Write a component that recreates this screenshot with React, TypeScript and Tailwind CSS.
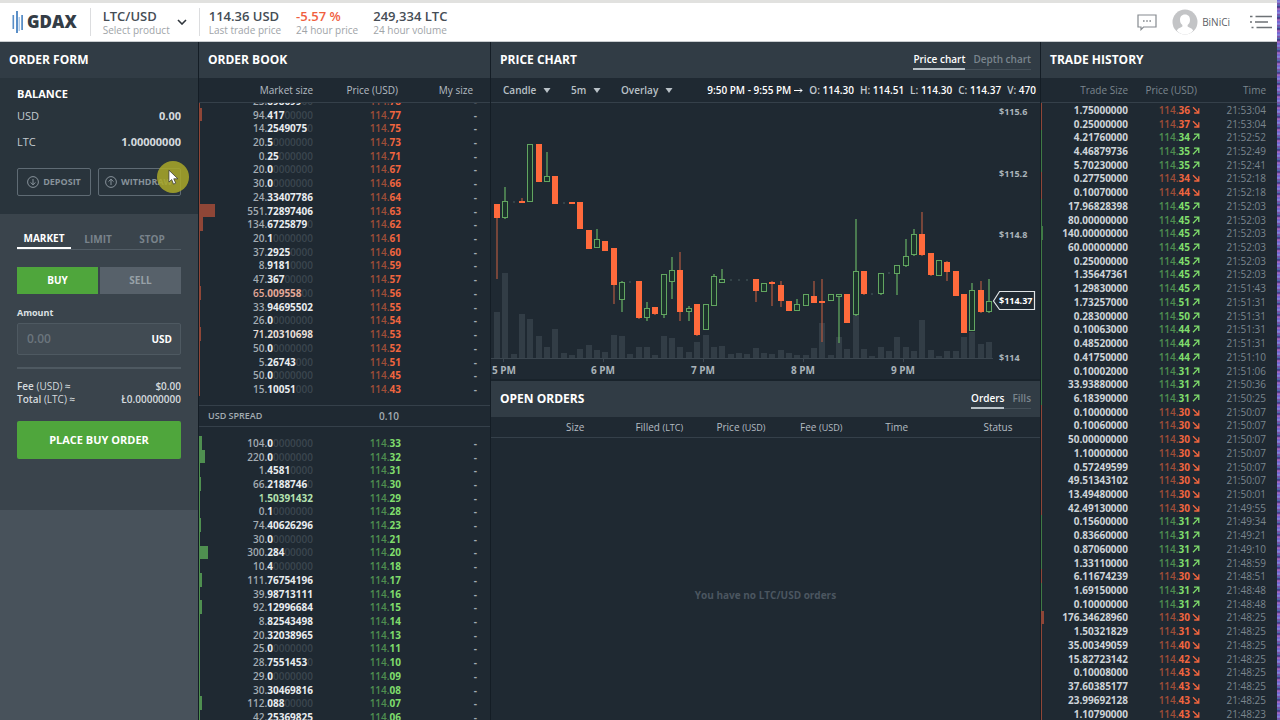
import React, { useState } from "react";

type Side = "up" | "down";
type Level = [size: string, price: string, tint?: string];
type Trade = [size: string, price: string, side: Side, time: string];
// [kind, wick top, body top, body bottom, wick bottom, volume top]
type Candle = ["r" | "g" | "d", number, number, number, number, number];

const asks: Level[] = [
  ["23.898699", "114.78"],
  ["94.417", "114.77"],
  ["14.2549075", "114.75"],
  ["20.5", "114.73"],
  ["0.25", "114.71"],
  ["20.0", "114.67"],
  ["30.0", "114.66"],
  ["24.33407786", "114.64"],
  ["551.72897406", "114.63"],
  ["134.6725879", "114.62"],
  ["20.1", "114.61"],
  ["37.2925", "114.60"],
  ["8.9181", "114.59"],
  ["47.367", "114.57"],
  ["65.009558", "114.56", "text-[#e3a898]"],
  ["33.94695502", "114.55"],
  ["26.0", "114.54"],
  ["71.20310698", "114.53", "text-[#e6ddd6]"],
  ["50.0", "114.52"],
  ["5.26743", "114.51"],
  ["50.0", "114.45"],
  ["15.10051", "114.43"],
];

const bids: Level[] = [
  ["104.0", "114.33"],
  ["220.0", "114.32"],
  ["1.4581", "114.31"],
  ["66.2188746", "114.30"],
  ["1.50391432", "114.29", "text-[#b5e3b0]"],
  ["0.1", "114.28"],
  ["74.40626296", "114.23"],
  ["30.0", "114.21"],
  ["300.284", "114.20"],
  ["10.4", "114.18"],
  ["111.76754196", "114.17"],
  ["39.98713111", "114.16"],
  ["92.12996684", "114.15"],
  ["8.82543498", "114.14"],
  ["20.32038965", "114.13"],
  ["25.0", "114.11"],
  ["28.7551453", "114.10"],
  ["29.0", "114.09"],
  ["30.30469816", "114.08"],
  ["112.088", "114.07"],
  ["42.25369825", "114.06"],
];

const trades: Trade[] = [
  ["1.75000000", "114.36", "down", "21:53:04"],
  ["0.25000000", "114.37", "down", "21:53:04"],
  ["4.21760000", "114.34", "up", "21:52:52"],
  ["4.46879736", "114.35", "up", "21:52:49"],
  ["5.70230000", "114.35", "up", "21:52:41"],
  ["0.27750000", "114.34", "down", "21:52:18"],
  ["0.10070000", "114.44", "down", "21:52:18"],
  ["17.96828398", "114.45", "up", "21:52:03"],
  ["80.00000000", "114.45", "up", "21:52:03"],
  ["140.00000000", "114.45", "up", "21:52:03"],
  ["60.00000000", "114.45", "up", "21:52:03"],
  ["0.25000000", "114.45", "up", "21:52:03"],
  ["1.35647361", "114.45", "up", "21:52:03"],
  ["1.29830000", "114.45", "up", "21:51:43"],
  ["1.73257000", "114.51", "up", "21:51:31"],
  ["0.28300000", "114.50", "up", "21:51:31"],
  ["0.10063000", "114.44", "up", "21:51:31"],
  ["0.48520000", "114.44", "up", "21:51:31"],
  ["0.41750000", "114.44", "up", "21:51:10"],
  ["0.10002000", "114.31", "up", "21:51:06"],
  ["33.93880000", "114.31", "up", "21:50:36"],
  ["6.18390000", "114.31", "up", "21:50:25"],
  ["0.10000000", "114.30", "down", "21:50:07"],
  ["0.10060000", "114.30", "down", "21:50:07"],
  ["50.00000000", "114.30", "down", "21:50:07"],
  ["1.10000000", "114.30", "down", "21:50:07"],
  ["0.57249599", "114.30", "down", "21:50:07"],
  ["49.51343102", "114.30", "down", "21:50:07"],
  ["13.49480000", "114.30", "down", "21:50:01"],
  ["42.49130000", "114.30", "down", "21:49:55"],
  ["0.15600000", "114.31", "up", "21:49:34"],
  ["0.83660000", "114.31", "up", "21:49:21"],
  ["0.87060000", "114.31", "up", "21:49:10"],
  ["1.33110000", "114.31", "up", "21:48:59"],
  ["6.11674239", "114.30", "down", "21:48:51"],
  ["1.69150000", "114.31", "up", "21:48:48"],
  ["0.10000000", "114.31", "up", "21:48:48"],
  ["176.34628960", "114.30", "down", "21:48:25"],
  ["1.50321829", "114.31", "down", "21:48:25"],
  ["35.00349059", "114.40", "down", "21:48:25"],
  ["15.82723142", "114.42", "down", "21:48:25"],
  ["0.10008000", "114.43", "down", "21:48:25"],
  ["37.60385177", "114.43", "down", "21:48:25"],
  ["23.99692128", "114.43", "down", "21:48:25"],
  ["1.10790000", "114.43", "down", "21:48:23"],
];

const candles: Candle[] = [
  ["r", 204, 204, 218, 279, 312],
  ["g", 187, 201, 218, 219, 273],
  ["d", 202, 202, 202, 202, 354],
  ["r", 198, 201, 203, 203, 314],
  ["g", 144, 144, 202, 202, 319],
  ["r", 144, 144, 182, 182, 336],
  ["g", 152, 176, 182, 182, 347],
  ["r", 176, 176, 204, 204, 329],
  ["d", 203, 203, 203, 203, 353],
  ["r", 202, 202, 204, 204, 355],
  ["r", 202, 202, 229, 229, 349],
  ["r", 230, 230, 249, 249, 345],
  ["g", 229, 239, 248, 248, 350],
  ["r", 241, 241, 251, 251, 352],
  ["r", 248, 248, 285, 304, 335],
  ["g", 281, 282, 300, 312, 336],
  ["d", 282, 282, 282, 282, 354],
  ["r", 281, 281, 318, 319, 347],
  ["g", 302, 308, 318, 321, 347],
  ["r", 307, 307, 314, 315, 355],
  ["g", 274, 274, 315, 318, 336],
  ["g", 257, 270, 282, 299, 338],
  ["r", 252, 270, 312, 321, 347],
  ["g", 306, 308, 312, 321, 352],
  ["r", 304, 304, 335, 336, 342],
  ["g", 304, 304, 330, 330, 335],
  ["g", 274, 276, 306, 306, 347],
  ["g", 269, 279, 283, 283, 346],
  ["d", 280, 280, 280, 280, 354],
  ["d", 280, 280, 280, 280, 353],
  ["d", 280, 280, 280, 280, 354],
  ["r", 279, 279, 291, 302, 348],
  ["g", 283, 283, 292, 292, 353],
  ["r", 281, 282, 284, 306, 354],
  ["r", 281, 285, 301, 307, 350],
  ["r", 301, 301, 311, 311, 353],
  ["g", 299, 304, 311, 311, 355],
  ["g", 294, 294, 306, 306, 355],
  ["r", 281, 296, 303, 303, 348],
  ["r", 279, 301, 303, 342, 323],
  ["g", 294, 294, 301, 301, 355],
  ["g", 294, 294, 297, 343, 337],
  ["r", 294, 294, 323, 323, 349],
  ["g", 219, 271, 315, 316, 315],
  ["r", 271, 271, 294, 295, 349],
  ["d", 294, 294, 294, 294, 356],
  ["g", 273, 273, 294, 295, 347],
  ["d", 273, 273, 273, 273, 351],
  ["g", 265, 265, 274, 295, 337],
  ["g", 239, 256, 266, 267, 347],
  ["g", 229, 234, 255, 256, 351],
  ["r", 212, 234, 255, 256, 320],
  ["r", 253, 253, 275, 276, 350],
  ["g", 260, 260, 276, 276, 356],
  ["r", 261, 262, 272, 281, 351],
  ["r", 271, 271, 296, 296, 351],
  ["r", 294, 294, 333, 333, 337],
  ["g", 283, 290, 331, 331, 332],
  ["r", 281, 290, 312, 313, 344],
  ["g", 279, 301, 312, 313, 342],
];

const Arrow = ({ side }: { side: Side }) => (
  <svg viewBox="0 0 8 8" className="ml-[2px] inline-block h-2 w-2 align-baseline" fill="none" stroke="currentColor" strokeWidth="1.3">
    <path d={side === "up" ? "M1 7.2 6.6 1.4M2 1.2h4.8v4.8" : "M1 1.2 6.6 6.8M2.2 7h4.6V2.2"} />
  </svg>
);

const Price = ({ price, side }: { price: string; side: Side }) => (
  <>
    <span className={side === "up" ? "font-semibold text-[#4f8f50]" : "font-semibold text-[#a04e38]"}>{price.slice(0, 4)}</span>
    <span className={side === "up" ? "font-bold text-[#7fdd6c]" : "font-bold text-[#f0653f]"}>{price.slice(4)}</span>
  </>
);

const PanelHeader = ({ title, children }: { title: string; children?: React.ReactNode }) => (
  <div className="flex h-9 shrink-0 items-center justify-between bg-[#313c45] px-[9px]">
    <h2 className="text-[12px] font-bold text-white">{title}</h2>
    {children}
  </div>
);

const HeaderTabs = ({ tabs }: { tabs: string[] }) => {
  const [active, setActive] = useState(tabs[0]);
  return (
    <div className="flex text-[10px] font-semibold">
      {tabs.map((tab) => (
        <button
          key={tab}
          type="button"
          onClick={() => setActive(tab)}
          className={
            tab === active
              ? "border-b-2 border-[#b9c2c8] pb-px leading-4 text-white"
              : "border-b border-[#46515a] pb-[2px] pl-2 leading-4 text-[#7a858d]"
          }
        >
          {tab}
        </button>
      ))}
    </div>
  );
};

const Logo = () => (
  <div className="flex items-center gap-[3px]">
    <svg viewBox="0 0 12 24" className="h-6 w-3" fill="#5a8fc8">
      <rect x="0.5" y="5" width="1.6" height="14" />
      <rect x="4" y="1" width="2" height="22" />
      <rect x="6.6" y="7" width="1.2" height="14" fill="#9dbfe2" />
      <rect x="9.2" y="5" width="1.8" height="15" />
    </svg>
    <span className="text-[17px] leading-6 font-extrabold text-[#343d46]">GDAX</span>
  </div>
);

const Stat = ({ value, label, className = "text-[#454d55]" }: { value: string; label: string; className?: string }) => (
  <div>
    <div className={`text-[13px] leading-4 font-semibold ${className}`}>{value}</div>
    <div className="text-[10px] leading-3 text-[#a0a4a8]">{label}</div>
  </div>
);

const TopBar = () => (
  <header className="flex h-[42px] shrink-0 items-center border-t-[3px] border-b border-t-[#e1e1df] border-b-[#c9cdd0] bg-white pr-[5px] pl-3">
    <Logo />
    <div className="ml-[13px] h-7 w-px bg-[#dcdddf]" />
    <button type="button" className="ml-3 flex w-[84px] items-center justify-between text-left">
      <Stat value="LTC/USD" label="Select product" />
      <svg viewBox="0 0 10 6" className="h-[6px] w-[10px] shrink-0" fill="none" stroke="#30363c" strokeWidth="1.6">
        <path d="M1 1l4 4 4-4" />
      </svg>
    </button>
    <div className="ml-3 h-7 w-px bg-[#dcdddf]" />
    <div className="ml-[9px] flex gap-[15px]">
      <Stat value="114.36 USD" label="Last trade price" />
      <Stat value="-5.57 %" label="24 hour price" className="text-[#f0603f]" />
      <Stat value="249,334 LTC" label="24 hour volume" />
    </div>
    <div className="ml-auto flex items-center">
      <button type="button" aria-label="Chat">
        <svg viewBox="0 0 20 17" className="h-[17px] w-5" fill="none" stroke="#858a8f" strokeWidth="1.2">
          <path d="M1 1h18v12H6.5L4 15.6V13H1z" />
          <path d="M6 7h1.600M9.200 7h1.600M12.400 7H14" strokeWidth="1.4" />
        </svg>
      </button>
      <button type="button" className="ml-[15px] flex items-center gap-1 text-[10px] text-[#5c6166]">
        <svg viewBox="0 0 26 26" className="h-[26px] w-[26px]">
          <circle cx="13" cy="13" r="12.5" fill="#c3c4c6" />
          <path d="M13 5.400c-3.400 0-5 2.400-5 5.300 0 2.400.9 4.200 2.400 5.300v1.600c-1.500 1-4 1.400-5.600 3.800 2 2.500 5 4 8.200 4s6.200-1.500 8.200-4c-1.600-2.400-4.100-2.800-5.600-3.800V16c1.500-1.100 2.400-2.900 2.400-5.300 0-2.900-1.600-5.300-5-5.300z" fill="#fff" />
        </svg>
        BiNiCi
      </button>
      <button type="button" aria-label="Menu" className="ml-5">
        <svg viewBox="0 0 22 14" className="h-[14px] w-[22px]" stroke="#6d7276" strokeWidth="1.3">
          <path d="M0 1.500h2.500M5.500 1.500H22M0 7h2M5 7h13M1.500 12.500H3.500M6.500 12.500H22" />
        </svg>
      </button>
    </div>
  </header>
);

const TransferIcon = ({ up }: { up?: boolean }) => (
  <svg viewBox="0 0 12 12" className="h-3 w-3" fill="none" stroke="currentColor">
    <circle cx="6" cy="6" r="5.4" />
    <path d={up ? "M6 9V3.200M3.500 5.600 6 3.200l2.500 2.400" : "M6 3v5.800M3.500 6.400 6 8.800l2.500-2.400"} />
  </svg>
);

const OrderForm = () => {
  const [type, setType] = useState("MARKET");
  const [side, setSide] = useState("BUY");
  const [amount, setAmount] = useState("");

  return (
    <section className="flex min-h-0 flex-col bg-[#48525b]">
      <PanelHeader title="ORDER FORM" />

      {/* Balance */}
      <div className="relative bg-[#29343c] px-[17px] pt-2 pb-[18px] text-[11px] text-[#c3cacf]">
        <h3 className="leading-4 font-bold text-white">BALANCE</h3>
        <div className="mt-1 flex justify-between leading-5">
          <span>USD</span>
          <span className="font-bold text-[#d5dade]">0.00</span>
        </div>
        <div className="mt-[6px] flex justify-between leading-5">
          <span>LTC</span>
          <span className="font-bold text-[#d5dade]">1.00000000</span>
        </div>
        <div className="mt-4 flex gap-[7px] text-[9px] font-bold text-[#87929a]">
          <button type="button" className="flex h-7 w-[74px] items-center justify-center gap-1 rounded-[2px] border border-[#5f6b74]">
            <TransferIcon />
            DEPOSIT
          </button>
          <button type="button" className="flex h-7 flex-1 items-center gap-1 rounded-[2px] border border-[#5f6b74] pl-[6px]">
            <TransferIcon up />
            WITHDRAW
          </button>
        </div>
        {/* Pointer highlight */}
        <div className="absolute top-[83px] left-[157px] h-8 w-8 rounded-full bg-[#a9a828]/85">
          <svg viewBox="0 0 12 18" className="absolute top-2 left-[11px] h-[17px] w-[11px]">
            <path d="M1 1v13l3-2.800 2 5 2.400-1-2.100-4.800h4.500z" fill="#fff" stroke="#333" strokeWidth="0.8" />
          </svg>
        </div>
      </div>

      {/* Order entry */}
      <form className="h-[296px] bg-[#3a444c] px-[17px] pt-[15px]" onSubmit={(e) => e.preventDefault()}>
        <div className="flex border-b border-[#525d66] text-[10px] font-bold">
          {["MARKET", "LIMIT", "STOP"].map((name) => (
            <button
              key={name}
              type="button"
              onClick={() => setType(name)}
              className={
                name === type
                  ? "-mb-px h-5 w-[54px] border-b-2 border-white text-white"
                  : "h-5 w-[54px] text-[#79838b]"
              }
            >
              {name}
            </button>
          ))}
        </div>
        <div className="mt-[17px] grid grid-cols-2 gap-[2px] text-[10px] font-bold">
          {["BUY", "SELL"].map((name) => (
            <button
              key={name}
              type="button"
              onClick={() => setSide(name)}
              className={name === side ? "h-[27px] bg-[#4fa63c] text-white" : "h-[27px] bg-[#57616a] text-[#98a1a8]"}
            >
              {name}
            </button>
          ))}
        </div>
        <label htmlFor="amount" className="mt-[11px] block text-[9px] leading-4 font-bold text-[#dde1e4]">
          Amount
        </label>
        <div className="mt-[2px] flex h-8 items-center rounded-[2px] border border-[#4e5961] bg-[#414b53] px-2">
          <input
            id="amount"
            value={amount}
            onChange={(e) => setAmount(e.target.value)}
            placeholder="0.00"
            className="min-w-0 flex-1 bg-transparent pl-px text-[12px] font-semibold text-white outline-none placeholder:text-[#6b757d]"
          />
          <span className="text-[10px] font-bold text-white">USD</span>
        </div>
        <hr className="mt-3 border-t-2 border-[#4e5961]" />
        <div className="mt-[11px] text-[10px] leading-[13px] font-semibold text-[#d5dade]">
          <div className="flex justify-between">
            <span>Fee <span className="font-normal">(USD)</span> ≈</span>
            <span>$0.00</span>
          </div>
          <div className="flex justify-between">
            <span>Total <span className="font-normal">(LTC)</span> ≈</span>
            <span>Ł0.00000000</span>
          </div>
        </div>
        <button type="submit" className="mt-[15px] h-[38px] w-full rounded-[2px] bg-[#4fa63c] text-[11px] font-bold text-white">
          PLACE BUY ORDER
        </button>
      </form>
    </section>
  );
};

const BookCols = () => (
  <colgroup>
    <col className="w-5" />
    <col className="w-[94px]" />
    <col className="w-[88px]" />
    <col className="w-[76px]" />
    <col />
  </colgroup>
);

const LevelRow = ({ level, side }: { level: Level; side: Side }) => {
  const [size, price, tint] = level;
  const [whole, part] = size.split(".");
  return (
    <tr>
      <td className="relative p-0">
        <span
          className={side === "up" ? "absolute inset-y-0 left-0 bg-[#4f8f50]" : "absolute inset-y-0 left-0 bg-[#8f4637]"}
          style={{ width: Math.max(1, Math.round(parseFloat(size) / 35)) }}
        />
      </td>
      <td className="p-0 text-right">
        <span className={`font-semibold ${tint || "text-[#a3acb3]"}`}>{whole}.</span>
        <span className={`font-bold ${tint || "text-[#e8ecef]"}`}>{part}</span>
        <span className="font-semibold text-[#3b464f]">{"0".repeat(8 - part.length)}</span>
      </td>
      <td className="p-0 text-right">
        <Price price={price} side={side} />
      </td>
      <td className="p-0 text-right font-bold text-[#a3acb3]">-</td>
      <td className="p-0" />
    </tr>
  );
};

const OrderBook = () => (
  <section className="flex min-h-0 flex-col bg-[#1f2932]">
    <PanelHeader title="ORDER BOOK" />
    <table className="h-[25px] w-full shrink-0 table-fixed border-b border-[#35404a] text-[10px] text-[#b4bcc2]">
      <BookCols />
      <thead>
        <tr>
          <th />
          <th className="p-0 text-right font-normal whitespace-nowrap">Market size</th>
          <th className="p-0 pr-[3px] text-right font-normal">Price (USD)</th>
          <th className="p-0 pr-1 text-right font-normal">My size</th>
          <th />
        </tr>
      </thead>
    </table>
    <div className="flex h-[302px] shrink-0 flex-col justify-end overflow-hidden pb-[9px]">
      <table className="h-[302px] w-full shrink-0 table-fixed text-[10px] leading-3">
        <BookCols />
        <tbody>
          {asks.map((level) => (
            <LevelRow key={level[1]} level={level} side="down" />
          ))}
        </tbody>
      </table>
    </div>
    <div className="flex h-[22px] shrink-0 items-center border-y border-[#35404a] pl-[9px] font-semibold text-[#a3acb3]">
      <span className="w-[149px] text-[9px]">USD SPREAD</span>
      <span className="w-[42px] text-right text-[10px]">0.10</span>
    </div>
    <div className="min-h-0 flex-1 overflow-hidden pt-[9px]">
      <table className="h-[288px] w-full table-fixed text-[10px] leading-3">
        <BookCols />
        <tbody>
          {bids.map((level) => (
            <LevelRow key={level[1]} level={level} side="up" />
          ))}
        </tbody>
      </table>
    </div>
  </section>
);

const ToolSelect = ({ label, options }: { label: string; options: string[] }) => (
  <label className="flex items-center">
    <select aria-label={label} className="appearance-none bg-transparent p-0 font-semibold text-[#b9c1c7] outline-none">
      {options.map((option) => (
        <option key={option}>{option}</option>
      ))}
    </select>
    <svg viewBox="0 0 8 5" className="ml-[6px] h-[5px] w-2" fill="#b9c1c7">
      <path d="M0.500 0h7L4 5z" />
    </svg>
  </label>
);

const CandleShape = ({ candle, x }: { candle: Candle; x: number }) => {
  const [kind, high, top, bottom, low] = candle;
  if (kind === "d") {
    return <rect x={x - 0.5} y={top - 0.5} width="1" height="1" fill="#6f8f8c" />;
  }
  if (kind === "r") {
    return (
      <g>
        <path d={`M${x} ${high}V${low}`} stroke="#b35a40" strokeWidth="1.2" />
        <rect x={x - 3} y={top} width="6" height={bottom - top} fill="#ff6a3c" />
      </g>
    );
  }
  return (
    <g stroke="#62a660">
      <path d={`M${x} ${high}V${top}M${x} ${bottom}V${low}`} strokeWidth="1.3" />
      <rect x={x - 2.5} y={top + 0.5} width="5" height={bottom - top - 1} fill="#1b322b" />
    </g>
  );
};

const CandleChart = () => {
  const centre = (i: number) => Math.round(497 + i * 8.34);
  return (
    <svg viewBox="491 103 549 276" className="block w-full" fontSize="9" fontWeight="700">
      {candles.map((c, i) => (
        <rect key={i} x={centre(i) - 3} y={c[5]} width="6" height={358 - c[5]} fill="#323d46" />
      ))}
      <path d="M491 358.500H993M503.500 358v4M603.500 358v4M703.500 358v4M803.500 358v4M903.500 358v4" stroke="#3b464f" />
      {candles.map((c, i) => (
        <CandleShape key={i} candle={c} x={centre(i)} />
      ))}
      <g fill="#aab3b9" fontSize="10">
        <text x="492" y="374">5 PM</text>
        <text x="603" y="374" textAnchor="middle">6 PM</text>
        <text x="703" y="374" textAnchor="middle">7 PM</text>
        <text x="803" y="374" textAnchor="middle">8 PM</text>
        <text x="903" y="374" textAnchor="middle">9 PM</text>
      </g>
      <g fill="#aab3b9">
        <text x="999" y="115">$115.6</text>
        <text x="999" y="177">$115.2</text>
        <text x="999" y="238">$114.8</text>
        <text x="999" y="361">$114</text>
      </g>
      <path d="M993.500 301l6-9.500h35v18h-35z" fill="#1f2932" stroke="#dfe4e7" strokeWidth="1.2" />
      <text x="999" y="304" fill="#fff">$114.37</text>
    </svg>
  );
};

const PriceChart = () => (
  <section className="flex flex-col">
    <PanelHeader title="PRICE CHART">
      <HeaderTabs tabs={["Price chart", "Depth chart"]} />
    </PanelHeader>
    <div className="flex h-[25px] items-center justify-between border-b border-[#35404a] pr-1 pl-3 text-[10px]">
      <div className="flex gap-5">
        <ToolSelect label="Chart type" options={["Candle", "Line"]} />
        <ToolSelect label="Interval" options={["5m", "1h"]} />
        <ToolSelect label="Overlay" options={["Overlay"]} />
      </div>
      <div className="flex gap-[6px] font-semibold whitespace-nowrap text-white">
        <span className="flex items-center gap-[3px]">
          9:50 PM - 9:55 PM
          <svg viewBox="0 0 9 5" className="h-[5px] w-[9px]" fill="none" stroke="currentColor">
            <path d="M0 2.500h8M6 0.500l2 2-2 2" />
          </svg>
        </span>
        {[["O", "114.30"], ["H", "114.51"], ["L", "114.30"], ["C", "114.37"], ["V", "470"]].map(([key, value]) => (
          <span key={key}>
            <span className="text-[#c3cacf]">{key}:</span> {value}
          </span>
        ))}
      </div>
    </div>
    <CandleChart />
  </section>
);

const OpenOrders = () => (
  <section className="flex min-h-0 flex-1 flex-col border-t-2 border-[#19232b]">
    <PanelHeader title="OPEN ORDERS">
      <HeaderTabs tabs={["Orders", "Fills"]} />
    </PanelHeader>
    <table className="h-[21px] w-full table-fixed border-b border-[#35404a] text-[10px] text-[#b4bcc2]">
      <colgroup>
        <col className="w-[17%]" />
        <col className="w-[18%]" />
        <col className="w-[15%]" />
        <col className="w-[14%]" />
        <col className="w-[12%]" />
        <col className="w-[19%]" />
        <col />
      </colgroup>
      <thead>
        <tr>
          {[["Size"], ["Filled", "(LTC)"], ["Price", "(USD)"], ["Fee", "(USD)"], ["Time"], ["Status"]].map(([name, unit]) => (
            <th key={name} className="p-0 text-right font-normal">
              {name} {unit && <span className="text-[9px]">{unit}</span>}
            </th>
          ))}
          <th />
        </tr>
      </thead>
    </table>
    <p className="mt-[149px] text-center text-[10px] leading-4 font-bold text-[#4b5660]">You have no LTC/USD orders</p>
  </section>
);

const TradeCols = () => (
  <colgroup>
    <col className="w-2" />
    <col className="w-[79px]" />
    <col className="w-[72px]" />
    <col className="w-[66px]" />
    <col />
  </colgroup>
);

const TradeHistory = () => (
  <section className="flex min-h-0 flex-col overflow-hidden bg-[#1f2932]">
    <PanelHeader title="TRADE HISTORY" />
    <table className="h-[25px] w-full shrink-0 table-fixed border-b border-[#35404a] text-[10px] text-[#7b868e]">
      <TradeCols />
      <thead>
        <tr>
          <th />
          <th className="p-0 text-right font-normal">Trade Size</th>
          <th className="p-0 pr-[3px] text-right font-normal">Price (USD)</th>
          <th className="p-0 text-right font-normal">Time</th>
          <th />
        </tr>
      </thead>
    </table>
    <table className="h-[618px] w-full shrink-0 table-fixed text-[10px] leading-3">
      <TradeCols />
      <tbody>
        {trades.map(([size, price, side, time], i) => (
          <tr key={i}>
            <td className="relative p-0">
              <span
                className={side === "up" ? "absolute inset-y-0 left-0 bg-[#3f7a45]" : "absolute inset-y-0 left-0 bg-[#8f4637]"}
                style={{ width: Math.max(1, Math.round(parseFloat(size) / 60)) }}
              />
            </td>
            <td className="p-0 text-right font-bold text-[#cdd3d8]">{size}</td>
            <td className="p-0 text-right whitespace-nowrap">
              <Price price={price} side={side} />
              <span className={side === "up" ? "text-[#7fdd6c]" : "text-[#f0653f]"}>
                <Arrow side={side} />
              </span>
            </td>
            <td className="p-0 text-right text-[#7b868e]">{time}</td>
            <td className="p-0" />
          </tr>
        ))}
      </tbody>
    </table>
  </section>
);

export default function App() {
  return (
    <div className="flex h-screen overflow-hidden bg-[#141d25] font-['Open_Sans','Noto_Sans',sans-serif]">
      <div className="flex min-w-0 flex-1 flex-col">
        <TopBar />
        <main className="grid min-h-0 flex-1 grid-cols-[198px_291px_1fr_236px] gap-px">
          <OrderForm />
          <OrderBook />
          <div className="flex min-h-0 min-w-0 flex-col bg-[#1f2932]">
            <PriceChart />
            <OpenOrders />
          </div>
          <TradeHistory />
        </main>
      </div>
      <div className="w-[3px] bg-[repeating-linear-gradient(180deg,#6a5fd0_0px,#8a8fe0_2px,#7a3f9a_4px,#5a7fc0_5px,#3a2f80_7px,#b06fc0_9px,#6a5fd0_11px)]" />
    </div>
  );
}
